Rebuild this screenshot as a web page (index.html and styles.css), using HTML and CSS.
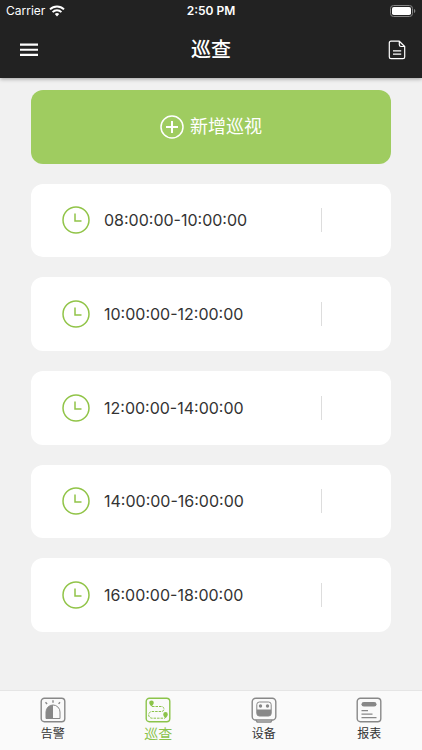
FILE: index.html
```html
<!DOCTYPE html>
<html lang="zh-CN">
<head>
<meta charset="utf-8">
<meta name="viewport" content="width=device-width, initial-scale=1">
<title>巡查</title>
<link rel="stylesheet" href="styles.css">
</head>
<body>
<header class="header">
  <div class="status">
    <div class="carrier">
      <span>Carrier</span>
      <svg width="16" height="12" viewBox="0 0 16 12" fill="none" stroke="#fff" stroke-width="2"><path d="M1 4.4a10 10 0 0 1 14 0M3.6 7.1a6.2 6.2 0 0 1 8.8 0"/><path d="M8 11.4 5.8 9.1a3.2 3.2 0 0 1 4.4 0z" fill="#fff" stroke="none"/></svg>
    </div>
    <span class="clock">2:50 PM</span>
    <svg class="battery" width="26" height="12" viewBox="0 0 26 12"><rect x=".5" y=".5" width="22" height="11" rx="3" fill="none" stroke="#858585"/><rect x="2" y="2" width="19" height="8" rx="1.8" fill="#fff"/><path d="M24 4v4c.8-.3 1.3-1 1.3-2S24.8 4.3 24 4z" fill="#858585"/></svg>
  </div>
  <div class="toolbar">
    <button class="tool" type="button" aria-label="菜单">
      <svg width="20" height="14" viewBox="0 0 20 14" fill="#fff"><path d="M1 .6h18v2.100H1zM1 5.700h18v2.100H1zM1 10.800h18v2.100H1z"/></svg>
    </button>
    <h1 class="title">巡查</h1>
    <button class="tool tool-end" type="button" aria-label="记录">
      <svg width="18" height="20" viewBox="0 0 18 20" fill="none" stroke="#fff" stroke-width="1.2" stroke-linejoin="round"><path d="M11.300 1.200H3Q1.300 1.200 1.300 2.900v14Q1.300 18.600 3 18.600h12q1.700 0 1.700-1.700V6.500zM11.300 1.200v3.600q0 1.700 1.700 1.700h3.700"/><path d="M5 10.800h8.200M5 14.200h8.200"/></svg>
    </button>
  </div>
</header>

<main class="list">
  <button class="add" type="button">
    <svg width="24" height="24" viewBox="0 0 24 24" fill="none" stroke="#fff"><circle cx="12" cy="12" r="11" stroke-width="1.5"/><path d="M12 6v12M6 12h12" stroke-width="2"/></svg>
    <span>新增巡视</span>
  </button>
  <article class="card"><svg class="time-icon" viewBox="0 0 28 28"><circle cx="14" cy="14" r="13"/><path d="M13 7.500V15h6.500"/></svg><time class="time">08:00:00-10:00:00</time><span class="rule"></span></article>
  <article class="card"><svg class="time-icon" viewBox="0 0 28 28"><circle cx="14" cy="14" r="13"/><path d="M13 7.500V15h6.500"/></svg><time class="time">10:00:00-12:00:00</time><span class="rule"></span></article>
  <article class="card"><svg class="time-icon" viewBox="0 0 28 28"><circle cx="14" cy="14" r="13"/><path d="M13 7.500V15h6.500"/></svg><time class="time">12:00:00-14:00:00</time><span class="rule"></span></article>
  <article class="card"><svg class="time-icon" viewBox="0 0 28 28"><circle cx="14" cy="14" r="13"/><path d="M13 7.500V15h6.500"/></svg><time class="time">14:00:00-16:00:00</time><span class="rule"></span></article>
  <article class="card"><svg class="time-icon" viewBox="0 0 28 28"><circle cx="14" cy="14" r="13"/><path d="M13 7.500V15h6.500"/></svg><time class="time">16:00:00-18:00:00</time><span class="rule"></span></article>
</main>

<nav class="tabs">
  <a class="tab" href="#alarm">
    <svg class="tab-icon" viewBox="0 0 26 26"><rect x="1.200" y="1.200" width="23.600" height="23.600" rx="3.200"/><path d="M6 21.500V15a7 7 0 0 1 14 0v6.500z" stroke-width="1"/><path class="solid" d="M6 21.500V15a7 7 0 0 1 7-7v13.500z"/><path d="M5.500 5.200l1.600 1.700M13 3.200v2.600M20 5.200l-1.400 1.700"/></svg>
    <span>告警</span>
  </a>
  <a class="tab active" href="#patrol" aria-current="page">
    <svg class="tab-icon" viewBox="0 0 26 26"><rect x="1.200" y="1.200" width="23.600" height="23.600" rx="3.200"/><path class="solid" d="M6.500 9.600C5.100 7.900 4.200 6.900 4.200 5.800a2.300 2.300 0 0 1 4.600 0c0 1.100-.9 2.100-2.300 3.800zM20.500 21.200c-1.400-1.700-2.300-2.700-2.300-3.800a2.300 2.300 0 0 1 4.600 0c0 1.100-.9 2.100-2.300 3.800z"/><path d="M7 9.500h9.500a2.500 2.500 0 0 1 0 5H7a3.300 3.300 0 0 0 0 6.700h13" stroke-width="1" stroke-dasharray="2.500 1"/></svg>
    <span>巡查</span>
  </a>
  <a class="tab" href="#device">
    <svg class="tab-icon" viewBox="0 0 26 26"><rect x="1.200" y="1.200" width="23.600" height="21.800" rx="3.600"/><path d="M5 23l1.200 2h13.600l1.200-2"/><rect x="5.800" y="5" width="14.400" height="14" rx="2.600" stroke-width="1"/><path class="solid" d="M5.800 12.500h14.400V16q0 3-3 3H8.800q-3 0-3-3z"/><circle class="solid" cx="9.500" cy="9" r="1.700"/><circle class="solid" cx="16.500" cy="9" r="1.700"/></svg>
    <span>设备</span>
  </a>
  <a class="tab" href="#report">
    <svg class="tab-icon" viewBox="0 0 26 26"><rect x="1.200" y="1.200" width="23.600" height="23.600" rx="3.200"/><rect class="solid" x="5.500" y="5" width="15" height="4.600" rx="2.300"/><path d="M5.500 13.700H12M5.500 17.200h11M5.500 20.700h15" stroke-width="1.200"/></svg>
    <span>报表</span>
  </a>
</nav>
</body>
</html>
```

FILE: styles.css
```css
* {
  box-sizing: border-box;
}

body {
  margin: 0;
  min-height: 100vh;
  display: flex;
  flex-direction: column;
  background: #f1f1f1;
  color: #333;
  font-family: Inter, "Noto Sans CJK SC", sans-serif;
}

button {
  margin: 0;
  padding: 0;
  border: 0;
  background: none;
  color: inherit;
  font: inherit;
}

svg {
  display: block;
}

.header {
  background: #222;
  color: #fff;
  box-shadow: 0 1px 4px rgba(0, 0, 0, 0.35);
}

.status {
  display: grid;
  grid-template-columns: 1fr auto 1fr;
  align-items: center;
  height: 22px;
  padding: 0 6px;
  font-size: 12px;
  line-height: 22px;
}

.carrier {
  display: flex;
  align-items: center;
  gap: 4px;
}

.clock {
  font-weight: 600;
}

.battery {
  justify-self: end;
}

.toolbar {
  display: grid;
  grid-template-columns: 1fr auto 1fr;
  align-items: center;
  height: 56px;
  padding: 0 9px;
}

.tool {
  width: 40px;
  height: 40px;
  display: grid;
  place-items: center;
}

.tool-end {
  width: 32px;
  justify-self: end;
}

.title {
  margin: 0;
  font-size: 20px;
  font-weight: 500;
  line-height: 24px;
}

.list {
  flex: 1;
  display: grid;
  grid-auto-rows: 1fr;
  gap: 20px;
  padding: 12px 31px 58px;
}

.add,
.card {
  display: flex;
  align-items: center;
  min-height: 72px;
  border-radius: 12px;
}

.add {
  justify-content: center;
  gap: 6px;
  background: #9fcc60;
  color: #fff;
  font-size: 18px;
  line-height: 24px;
}

.card {
  padding: 0 69px 0 31px;
  background: #fff;
}

.time-icon {
  width: 28px;
  height: 28px;
  margin-right: 14px;
  fill: none;
  stroke: #91c448;
  stroke-width: 1.5;
}

.time {
  font-size: 16px;
  line-height: 24px;
}

.rule {
  width: 1px;
  height: 24px;
  margin-left: auto;
  background: #ddd;
}

.tabs {
  display: grid;
  grid-template-columns: repeat(4, 1fr);
  height: 60px;
  border-top: 1px solid #e5e5e5;
  background: #fafafa;
}

.tab {
  display: flex;
  flex-direction: column;
  align-items: center;
  padding-top: 6px;
  gap: 2px;
  color: #333;
  font-size: 12px;
  line-height: 18px;
  text-decoration: none;
}

.tab-icon {
  width: 26px;
  height: 26px;
  fill: none;
  stroke: #888;
  stroke-width: 1.4;
}

.tab-icon .solid {
  fill: #888;
  stroke: none;
}

.active {
  color: #8bc34a;
  font-size: 14px;
}

.active .tab-icon {
  stroke: #8bc34a;
}

.active .solid {
  fill: #8bc34a;
}
```
